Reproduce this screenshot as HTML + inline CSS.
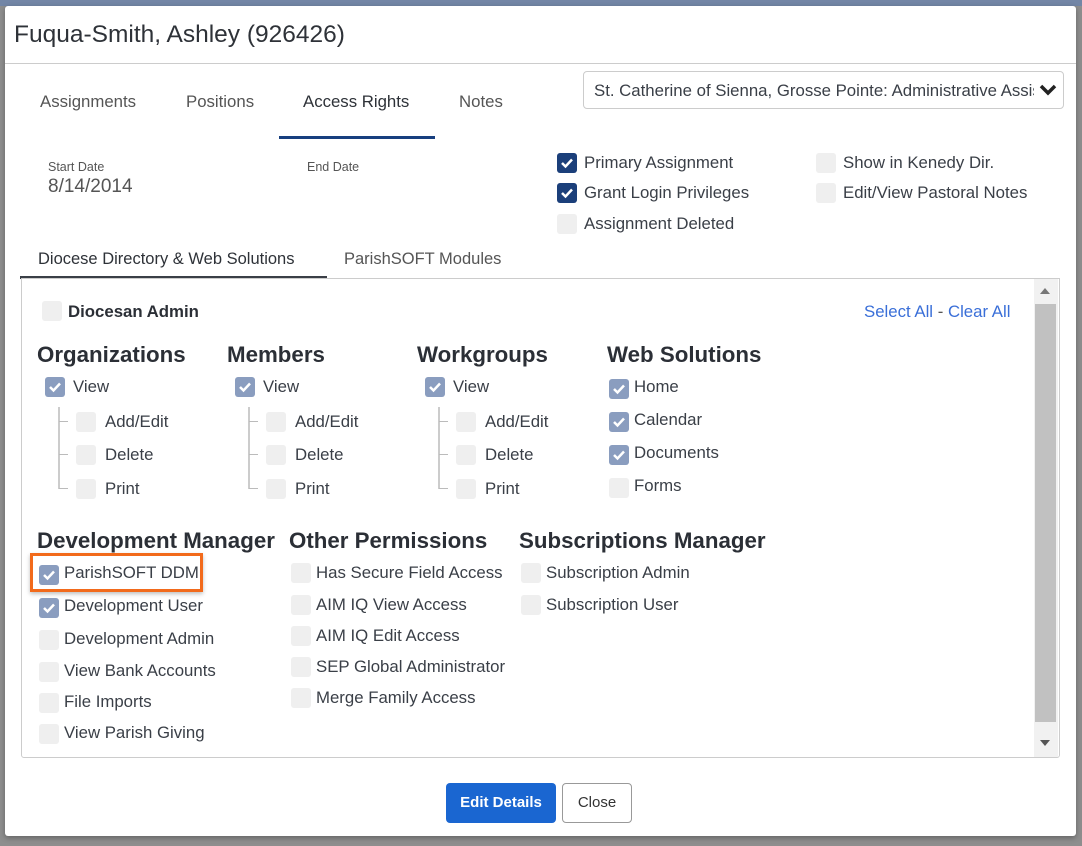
<!DOCTYPE html>
<html><head><meta charset="utf-8"><style>
*{margin:0;padding:0;box-sizing:border-box}
body{width:1082px;height:846px;overflow:hidden;background:#8e8e8e;font-family:"Liberation Sans",sans-serif;color:#333;position:relative}
.a{position:absolute;white-space:nowrap}
.t{font-size:16.8px;line-height:20px;color:#3a3f47}
.h{font-size:22.3px;font-weight:bold;line-height:26px;color:#2b2f36}
.cb{position:absolute;width:20px;height:20px;border-radius:3px;background:#efefef}
.cb.on{background:#8a9dbf}
.cb.dk{background:#1b3f7a}
.cb svg{position:absolute;left:3px;top:4px}
.tl{position:absolute;border-left:2px solid #ccc;}
.tb{position:absolute;border-bottom:1px solid #bbb;width:9px}
</style></head><body>
<div class="a" style="left:0;top:0;width:1082px;height:6px;background:#7386a6"></div>
<div class="a" style="left:5px;top:6px;width:1071px;height:830px;background:#fff;border-radius:3px;box-shadow:0 2px 6px rgba(0,0,0,.3)"></div>
<div class="a" style="left:14px;top:20px;font-size:24.5px;line-height:30px;color:#2e3238">Fuqua-Smith, Ashley (926426)</div>
<div class="a" style="left:5px;top:63px;width:1071px;height:1px;background:#ccc"></div>

<div class="a" style="left:40px;top:92px;font-size:16.8px;color:#555">Assignments</div>
<div class="a" style="left:186px;top:92px;font-size:16.8px;color:#555">Positions</div>
<div class="a" style="left:303px;top:92px;font-size:16.8px;color:#2e3238">Access Rights</div>
<div class="a" style="left:459px;top:92px;font-size:16.8px;color:#555">Notes</div>
<div class="a" style="left:279px;top:136px;width:156px;height:3px;background:#173f7f"></div>

<div class="a" style="left:583px;top:71px;width:481px;height:38px;border:1px solid #ccc;border-radius:4px;overflow:hidden">
<div class="a" style="left:10px;top:9px;font-size:16.8px;color:#3a3f47;width:440px;overflow:hidden">St. Catherine of Sienna, Grosse Pointe: Administrative Assistant</div>
<svg class="a" style="left:455px;top:11px" width="18" height="14" viewBox="0 0 18 14"><path d="M2 3 L9 10 L16 3" stroke="#222" stroke-width="3.5" fill="none"/></svg>
</div>

<div class="a" style="left:48px;top:160px;font-size:12.5px;color:#555">Start Date</div>
<div class="a" style="left:48px;top:176px;font-size:19px;color:#555">8/14/2014</div>
<div class="a" style="left:307px;top:160px;font-size:12.5px;color:#555">End Date</div>

<div class="cb dk" style="left:557px;top:153px"><svg width="14" height="12" viewBox="0 0 14 12"><path d="M2 6 L5.5 9.5 L12 2.5" stroke="#fff" stroke-width="2.5" fill="none"/></svg></div>
<div class="a t" style="left:584px;top:153px">Primary Assignment</div>
<div class="cb dk" style="left:557px;top:183px"><svg width="14" height="12" viewBox="0 0 14 12"><path d="M2 6 L5.5 9.5 L12 2.5" stroke="#fff" stroke-width="2.5" fill="none"/></svg></div>
<div class="a t" style="left:584px;top:183px">Grant Login Privileges</div>
<div class="cb" style="left:557px;top:214px"></div>
<div class="a t" style="left:584px;top:214px">Assignment Deleted</div>
<div class="cb" style="left:816px;top:153px"></div>
<div class="a t" style="left:843px;top:153px">Show in Kenedy Dir.</div>
<div class="cb" style="left:816px;top:183px"></div>
<div class="a t" style="left:843px;top:183px">Edit/View Pastoral Notes</div>

<div class="a" style="left:38px;top:250px;font-size:16.5px;color:#2e3238">Diocese Directory &amp; Web Solutions</div>
<div class="a" style="left:344px;top:250px;font-size:16.5px;color:#555">ParishSOFT Modules</div>
<div class="a" style="left:20px;top:276px;width:307px;height:3px;background:#3a3f47"></div>

<div class="a" style="left:21px;top:278px;width:1039px;height:480px;border:1px solid #ccc;border-radius:0 0 3px 3px"></div>
<div class="a" style="left:1034px;top:279px;width:24px;height:478px;background:#f1f1f1"></div>
<div class="a" style="left:1035px;top:304px;width:21px;height:418px;background:#c1c1c1"></div>
<div class="a" style="left:1040px;top:288px;width:0;height:0;border-left:5px solid transparent;border-right:5px solid transparent;border-bottom:6px solid #777"></div>
<div class="a" style="left:1040px;top:740px;width:0;height:0;border-left:5px solid transparent;border-right:5px solid transparent;border-top:6px solid #555"></div>

<div class="cb" style="left:42px;top:301px"></div>
<div class="a" style="left:68px;top:302px;font-size:16.8px;font-weight:bold;line-height:20px;color:#2b2f36">Diocesan Admin</div>
<div class="a" style="left:864px;top:302px;font-size:16.8px;line-height:20px;color:#3a6fd8">Select All <span style="color:#555">-</span> Clear All</div>

<div class="a h" style="left:37px;top:342px">Organizations</div>
<div class="a h" style="left:227px;top:342px">Members</div>
<div class="a h" style="left:417px;top:342px">Workgroups</div>
<div class="a h" style="left:607px;top:342px">Web Solutions</div>

<!-- Org -->
<div class="cb on" style="left:45px;top:377px"><svg width="14" height="12" viewBox="0 0 14 12"><path d="M2 6 L5.5 9.5 L12 2.5" stroke="#fff" stroke-width="2.5" fill="none"/></svg></div>
<div class="a t" style="left:73px;top:377px">View</div>
<div class="tl" style="left:58px;top:407px;height:82px"></div>
<div class="tb" style="left:59px;top:421px"></div><div class="tb" style="left:59px;top:454px"></div><div class="tb" style="left:59px;top:488px"></div>
<div class="cb" style="left:76px;top:412px"></div><div class="a t" style="left:105px;top:412px">Add/Edit</div>
<div class="cb" style="left:76px;top:445px"></div><div class="a t" style="left:105px;top:445px">Delete</div>
<div class="cb" style="left:76px;top:479px"></div><div class="a t" style="left:105px;top:479px">Print</div>

<!-- Members -->
<div class="cb on" style="left:235px;top:377px"><svg width="14" height="12" viewBox="0 0 14 12"><path d="M2 6 L5.5 9.5 L12 2.5" stroke="#fff" stroke-width="2.5" fill="none"/></svg></div>
<div class="a t" style="left:263px;top:377px">View</div>
<div class="tl" style="left:248px;top:407px;height:82px"></div>
<div class="tb" style="left:249px;top:421px"></div><div class="tb" style="left:249px;top:454px"></div><div class="tb" style="left:249px;top:488px"></div>
<div class="cb" style="left:266px;top:412px"></div><div class="a t" style="left:295px;top:412px">Add/Edit</div>
<div class="cb" style="left:266px;top:445px"></div><div class="a t" style="left:295px;top:445px">Delete</div>
<div class="cb" style="left:266px;top:479px"></div><div class="a t" style="left:295px;top:479px">Print</div>

<!-- Workgroups -->
<div class="cb on" style="left:425px;top:377px"><svg width="14" height="12" viewBox="0 0 14 12"><path d="M2 6 L5.5 9.5 L12 2.5" stroke="#fff" stroke-width="2.5" fill="none"/></svg></div>
<div class="a t" style="left:453px;top:377px">View</div>
<div class="tl" style="left:438px;top:407px;height:82px"></div>
<div class="tb" style="left:439px;top:421px"></div><div class="tb" style="left:439px;top:454px"></div><div class="tb" style="left:439px;top:488px"></div>
<div class="cb" style="left:456px;top:412px"></div><div class="a t" style="left:485px;top:412px">Add/Edit</div>
<div class="cb" style="left:456px;top:445px"></div><div class="a t" style="left:485px;top:445px">Delete</div>
<div class="cb" style="left:456px;top:479px"></div><div class="a t" style="left:485px;top:479px">Print</div>

<!-- Web -->
<div class="cb on" style="left:609px;top:379px"><svg width="14" height="12" viewBox="0 0 14 12"><path d="M2 6 L5.5 9.5 L12 2.5" stroke="#fff" stroke-width="2.5" fill="none"/></svg></div>
<div class="a t" style="left:634px;top:377px">Home</div>
<div class="cb on" style="left:609px;top:412px"><svg width="14" height="12" viewBox="0 0 14 12"><path d="M2 6 L5.5 9.5 L12 2.5" stroke="#fff" stroke-width="2.5" fill="none"/></svg></div>
<div class="a t" style="left:634px;top:410px">Calendar</div>
<div class="cb on" style="left:609px;top:445px"><svg width="14" height="12" viewBox="0 0 14 12"><path d="M2 6 L5.5 9.5 L12 2.5" stroke="#fff" stroke-width="2.5" fill="none"/></svg></div>
<div class="a t" style="left:634px;top:443px">Documents</div>
<div class="cb" style="left:609px;top:478px"></div>
<div class="a t" style="left:634px;top:476px">Forms</div>

<div class="a h" style="left:37px;top:528px">Development Manager</div>
<div class="a h" style="left:289px;top:528px">Other Permissions</div>
<div class="a h" style="left:519px;top:528px">Subscriptions Manager</div>

<div class="a" style="left:30px;top:553px;width:173px;height:39px;border:3px solid #f26a1b;box-shadow:0 2px 4px rgba(0,0,0,.25)"></div>
<div class="cb on" style="left:39px;top:565px"><svg width="14" height="12" viewBox="0 0 14 12"><path d="M2 6 L5.5 9.5 L12 2.5" stroke="#fff" stroke-width="2.5" fill="none"/></svg></div>
<div class="a t" style="left:64px;top:563px">ParishSOFT DDM</div>
<div class="cb on" style="left:39px;top:598px"><svg width="14" height="12" viewBox="0 0 14 12"><path d="M2 6 L5.5 9.5 L12 2.5" stroke="#fff" stroke-width="2.5" fill="none"/></svg></div>
<div class="a t" style="left:64px;top:596px">Development User</div>
<div class="cb" style="left:39px;top:630px"></div><div class="a t" style="left:64px;top:629px">Development Admin</div>
<div class="cb" style="left:39px;top:662px"></div><div class="a t" style="left:64px;top:661px">View Bank Accounts</div>
<div class="cb" style="left:39px;top:693px"></div><div class="a t" style="left:64px;top:692px">File Imports</div>
<div class="cb" style="left:39px;top:724px"></div><div class="a t" style="left:64px;top:723px">View Parish Giving</div>

<div class="cb" style="left:291px;top:563px"></div><div class="a t" style="left:316px;top:563px">Has Secure Field Access</div>
<div class="cb" style="left:291px;top:595px"></div><div class="a t" style="left:316px;top:595px">AIM IQ View Access</div>
<div class="cb" style="left:291px;top:626px"></div><div class="a t" style="left:316px;top:626px">AIM IQ Edit Access</div>
<div class="cb" style="left:291px;top:657px"></div><div class="a t" style="left:316px;top:657px">SEP Global Administrator</div>
<div class="cb" style="left:291px;top:688px"></div><div class="a t" style="left:316px;top:688px">Merge Family Access</div>

<div class="cb" style="left:521px;top:563px"></div><div class="a t" style="left:546px;top:563px">Subscription Admin</div>
<div class="cb" style="left:521px;top:595px"></div><div class="a t" style="left:546px;top:595px">Subscription User</div>

<div class="a" style="left:446px;top:783px;width:110px;height:40px;background:#1a66d1;border-radius:4px;color:#fff;font-size:15px;font-weight:bold;text-align:center;line-height:40px">Edit Details</div>
<div class="a" style="left:562px;top:783px;width:70px;height:40px;border:1px solid #999;border-radius:4px;color:#333;font-size:15px;text-align:center;line-height:38px">Close</div>
</body></html>
